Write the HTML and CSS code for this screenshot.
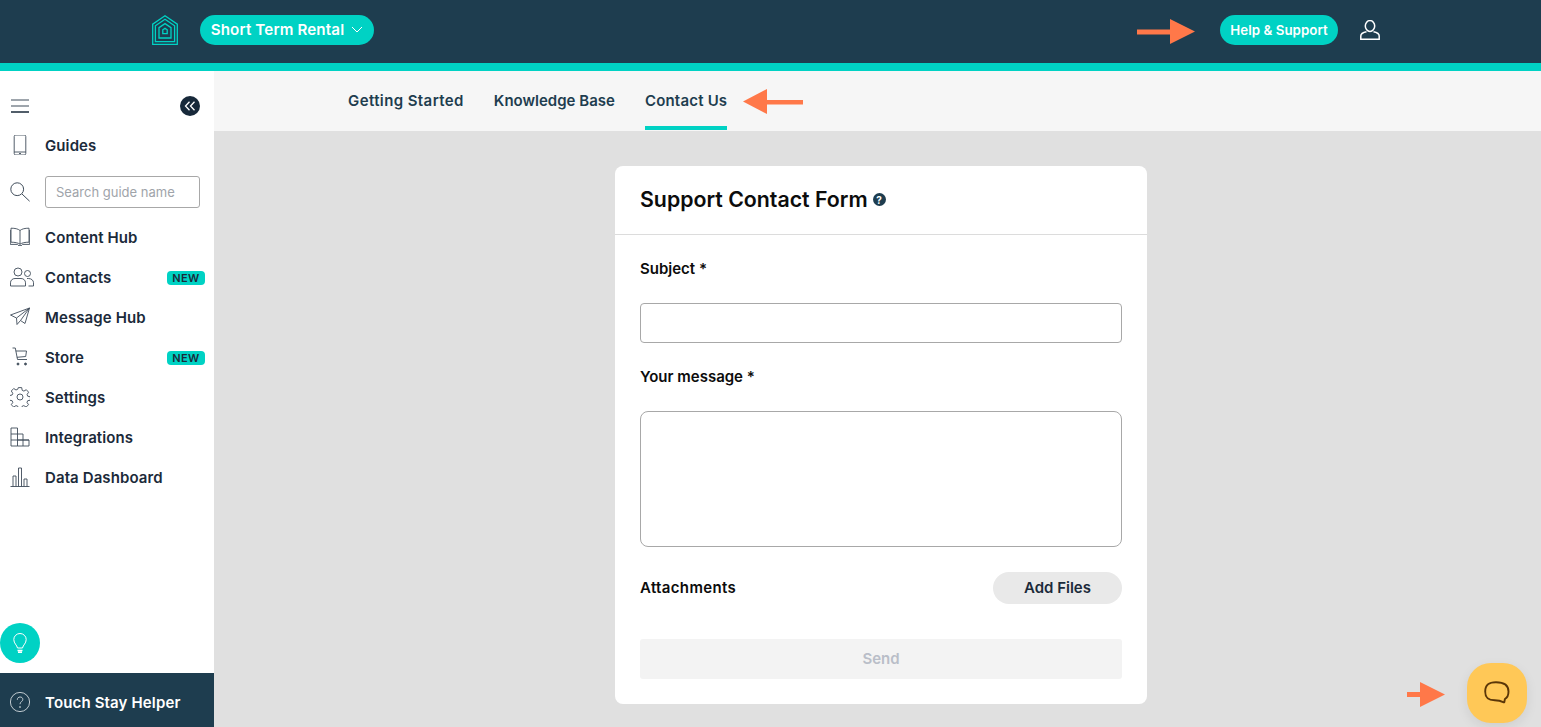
FILE: index.html
```html
<!DOCTYPE html>
<html lang="en">
<head>
<meta charset="utf-8">
<title>Support Contact Form</title>
<link rel="stylesheet" href="styles.css">
</head>
<body>
<header class="topbar">
  <svg class="logo" viewBox="0 0 26 30" fill="none" stroke="#00d2c4" stroke-width="1.300">
    <path d="M.7 29.300V9.200L13 .8l12.300 8.400v20.100z"/>
    <path d="M3.400 26.600V10.800L13 4.200l9.600 6.600v15.800z"/>
    <path d="M7 23V12.600L13 8.600l6 4V23z"/>
    <path d="M10.800 18.600v-3.800L13 13.200l2.200 1.600v3.800z"/>
  </svg>
  <button class="pill pill-large">Short Term Rental
    <svg class="chev" viewBox="0 0 12 7" fill="none" stroke="#fff" stroke-width="1"><path d="M1 1l5 5 5-5"/></svg>
  </button>
  <div class="topbar-right">
    <button class="pill pill-small">Help &amp; Support</button>
    <svg class="user" viewBox="0 0 20 20" fill="none" stroke="#fff" stroke-width="1.500"><ellipse cx="10" cy="6" rx="4.700" ry="5.400"/><path d="M6.500 11.800C3 12.500 .8 14 .8 16v3.200h18.400V16c0-2-2.200-3.500-5.700-4.200"/></svg>
  </div>
</header>

<div class="layout">
  <aside class="sidebar">
    <div class="side-top">
      <svg class="burger" viewBox="0 0 18 14" stroke="#3f4c5a" stroke-width="1.200"><path d="M0 1h18M0 7h18"/><path d="M0 13h18" stroke-width="1.800"/></svg>
      <span class="collapse">
        <svg viewBox="0 0 12 10" fill="none" stroke="#fff" stroke-width="1.300"><path d="M5.500 .8L1.500 5l4 4.200M10.500 .8L6.500 5l4 4.200"/></svg>
      </span>
    </div>
    <nav class="nav">
      <a class="nav-item nav-guides">
        <svg class="ico" viewBox="0 0 20 20" fill="none" stroke="#3f4c5a" stroke-width=".9"><rect x="4.200" y="0" width="11.600" height="20" rx="1.600"/><path d="M4.200 17h11.600M9 18.500h2"/></svg>
        <span>Guides</span>
      </a>
      <div class="nav-search">
        <svg class="ico" viewBox="0 0 20 20" fill="none" stroke="#3f4c5a" stroke-width="1"><circle cx="7.200" cy="7.200" r="6.400"/><path d="M12 12l7.600 7.200"/></svg>
        <input class="search" type="text" placeholder="Search guide name">
      </div>
      <a class="nav-item">
        <svg class="ico" viewBox="0 0 20 20" fill="none" stroke="#3f4c5a" stroke-width=".9"><path d="M10 3.500C8 1.800 5 1.200 1 1.200v14c4 0 7 .6 9 2 2-1.400 5-2 9-2v-14c-4 0-7 .6-9 2.300zM10 3.500v13.700"/><path d="M.3 3v14.400h7.500M19.700 3v14.400h-7.500M8 18.400h4"/></svg>
        <span>Content Hub</span>
      </a>
      <a class="nav-item">
        <svg class="ico ico-wide" viewBox="0 0 24 20" fill="none" stroke="#3f4c5a" stroke-width=".9"><circle cx="8" cy="5" r="4"/><path d="M.5 19v-3.200c0-2.600 2-4.300 4.500-4.300h6c2.500 0 4.500 1.700 4.500 4.300V19z"/><circle cx="17.500" cy="6.500" r="3"/><path d="M17 11.500h1.500c2.800 0 5 1.800 5 4.200V19h-5"/></svg>
        <span>Contacts</span>
        <b class="badge">NEW</b>
      </a>
      <a class="nav-item">
        <svg class="ico" viewBox="0 0 20 20" fill="none" stroke="#3f4c5a" stroke-width=".9"><path d="M19.500 1L.5 8l6 3L19.500 1l-9 12.500L15 16.500z"/><path d="M6.500 11l.5 6.500 3.500-4"/></svg>
        <span>Message Hub</span>
      </a>
      <a class="nav-item">
        <svg class="ico" viewBox="0 0 20 20" fill="none" stroke="#3f4c5a" stroke-width=".9"><path d="M2.500 1h2.800l2.200 11.500h9.500"/><path d="M5.800 4h10.700l-.8 5.500-8.800 .8"/><circle cx="8" cy="17" r="1" fill="#3f4c5a"/><circle cx="15.500" cy="17" r="1" fill="#3f4c5a"/></svg>
        <span>Store</span>
        <b class="badge">NEW</b>
      </a>
      <a class="nav-item">
        <svg class="ico" viewBox="0 0 20 20" fill="none" stroke="#3f4c5a" stroke-width=".9"><circle cx="10" cy="10" r="3"/><path d="M8.300.6h3.400l.5 2.700 1.700.8 2.400-1.400 2.300 2.500-1.500 2.300.6 1.700 2.700.6v3.400l-2.700.5-.7 1.700 1.500 2.300-2.400 2.400-2.300-1.500-1.700.7-.6 2.600H8.300l-.5-2.600-1.800-.7-2.300 1.500-2.400-2.400 1.500-2.300-.7-1.700-2.600-.5V8.600l2.600-.6.7-1.700-1.500-2.300 2.400-2.500L6 3l1.800-.8z"/></svg>
        <span>Settings</span>
      </a>
      <a class="nav-item">
        <svg class="ico" viewBox="0 0 20 20" fill="none" stroke="#3f4c5a" stroke-width=".9"><path d="M1 1h6.500v18H1zM1 7h6.500M1 13h18M7.500 7H13v12M7.500 13H19v6H7.500"/></svg>
        <span>Integrations</span>
      </a>
      <a class="nav-item">
        <svg class="ico" viewBox="0 0 20 20" fill="none" stroke="#3f4c5a" stroke-width=".9"><path d="M.5 19.500h19M3 19.500V9h3v10.500M8.500 19.500V1h3v18.500M14 19.500V12h3v7.500"/></svg>
        <span>Data Dashboard</span>
      </a>
    </nav>
    <span class="bulb">
      <svg viewBox="0 0 14 20" fill="none" stroke="#fff" stroke-width="1"><path d="M4.500 15C4 12 .8 10.500 .8 6.500a6.200 6 0 0 1 12.400 0C13.200 10.500 10 12 9.500 15z"/><path d="M4.500 17.500h5M5 19.200h4" stroke-width="1.400"/></svg>
    </span>
    <div class="helper">
      <svg class="ico" viewBox="0 0 20 20" fill="none" stroke="#e8eef0" stroke-width=".8"><circle cx="10" cy="10" r="9.600"/><path d="M7.300 7.800c0-1.700 1.200-2.800 2.800-2.800s2.700 1 2.700 2.400c0 2.200-2.800 2.400-2.800 4.800"/><circle cx="10" cy="15" r=".5"/></svg>
      <span>Touch Stay Helper</span>
    </div>
  </aside>

  <main class="main">
    <nav class="tabs">
      <a class="tab tab-wide">Getting Started</a>
      <a class="tab">Knowledge Base</a>
      <a class="tab tab-active">Contact Us</a>
    </nav>
    <div class="content">
      <section class="card">
        <h1 class="card-title">Support Contact Form
          <span class="qmark">?</span>
        </h1>
        <form class="form">
          <label class="label label-first">Subject *</label>
          <input class="field" type="text">
          <label class="label label-msg">Your message *</label>
          <textarea class="field area"></textarea>
          <div class="attach">
            <span class="label label-att">Attachments</span>
            <button type="button" class="add">Add Files</button>
          </div>
          <button type="button" class="send">Send</button>
        </form>
      </section>
    </div>
  </main>
</div>

<svg class="arrow arrow-top" viewBox="0 0 58 25"><path d="M0 10.500h33V0l25 12.500L33 25V15.500H0z" fill="#ff7849"/></svg>
<svg class="arrow arrow-tab" viewBox="0 0 60 25"><path d="M60 11v4.500H24V25L0 12.500 24 0v11z" fill="#ff7849"/></svg>
<svg class="arrow arrow-chat" viewBox="0 0 38 25"><path d="M0 10h13V0l25 12.500L13 25V15H0z" fill="#ff7849"/></svg>
<button class="chat" aria-label="Chat">
  <svg viewBox="0 0 26 24" fill="none" stroke="#5a3608" stroke-width="1.900"><path d="M12 1.200c-6 0-10.800 1.300-10.800 9.300 0 7 4 8.600 9.500 8.800 3.500.1 6 .6 8.500 1.900 1 .5 1.300 0 1.300-1l.4-2.200c2.600-1.400 3.600-4 3.600-7.500C24.500 3 19 1.200 12 1.200z"/></svg>
</button>
</body>
</html>
```
FILE: styles.css
```css
* { box-sizing: border-box; }
html, body { margin: 0; height: 727px; overflow: hidden; }
body { font-family: Inter, "Liberation Sans", sans-serif; background: #e0e0e0; color: #1b2a3a; position: relative; }
button, input, textarea { font-family: inherit; }

.topbar { height: 71px; background: #1e3d4f; border-bottom: 8px solid #00d2c4; display: flex; align-items: center; padding: 0 161px 3px 152px; }
.logo { width: 26px; height: 30px; }
.pill { border: 0; background: #00d2c4; color: #fff; font-weight: 600; height: 30px; border-radius: 15px; display: flex; align-items: center; padding: 0 0 1px; justify-content: center; }
.pill-large { width: 174px; margin-left: 22px; font-size: 15.200px; letter-spacing: .12px; gap: 7px; }
.chev { width: 12px; height: 7px; }
.topbar-right { margin-left: auto; display: flex; align-items: center; gap: 22px; }
.pill-small { width: 118px; font-size: 13.300px; letter-spacing: .05px; }
.user { width: 20px; height: 20px; }

.layout { display: flex; height: 656px; }
.sidebar { width: 214px; background: #fff; display: flex; flex-direction: column; flex-shrink: 0; }
.side-top { display: flex; justify-content: space-between; align-items: center; height: 70px; padding: 0 14px 0 11px; }
.burger { width: 18px; height: 14px; }
.collapse { width: 20px; height: 20px; border-radius: 50%; background: #17293a; display: flex; align-items: center; justify-content: center; }
.collapse svg { width: 12px; height: 10px; }
.nav { display: flex; flex-direction: column; margin-top: -16px; }
.nav-item { display: flex; align-items: center; height: 40px; padding: 0 9px 0 10px; font-size: 15px; letter-spacing: .1px; font-weight: 600; color: #1b2a3a; }
.nav-search { display: flex; align-items: center; padding: 1px 14px 0 10px; height: 52px; }
.ico { width: 20px; height: 20px; margin-right: 15px; flex-shrink: 0; }
.ico-wide { width: 24px; margin-right: 11px; }
.search { width: 155px; height: 32px; border: 1px solid #a8a8a8; border-radius: 3px; padding: 0 10px; font-size: 13px; background: #fff; }
.search::placeholder { color: #a0a4aa; opacity: 1; }
.badge { margin: 1px 0 0 auto; background: #00d2c4; color: #1b2a3a; font-size: 11px; font-weight: 600; letter-spacing: .4px; height: 14px; width: 38px; border-radius: 4px; display: flex; align-items: center; justify-content: center; }
.bulb { margin-top: auto; margin-bottom: 10px; width: 40px; height: 40px; border-radius: 50%; background: #00d2c4; display: flex; align-items: center; justify-content: center; }
.bulb svg { width: 14px; height: 20px; }
.helper { height: 54px; background: #1e3d4f; color: #fff; display: flex; align-items: center; padding: 4px 0 0 10px; font-size: 15px; letter-spacing: .15px; font-weight: 600; }

.main { flex: 1; display: flex; flex-direction: column; min-width: 0; }
.tabs { height: 60px; background: #f6f6f6; display: flex; gap: 30px; padding-left: 134px; flex-shrink: 0; }
.tab { height: 59px; padding-top: 4px; display: flex; align-items: center; font-size: 15px; font-weight: 600; color: #1e3d4f; border-bottom: 4px solid transparent; }
.tab-wide { letter-spacing: .4px; }
.tab-active { border-bottom-color: #00d2c4; letter-spacing: .2px; }
.content { display: flex; justify-content: center; padding: 35px 0 0 7px; }
.card { width: 532px; height: 538px; background: #fff; border-radius: 8px; }
.card-title { margin: 0; height: 69px; border-bottom: 1px solid #dcdcdc; padding: 0 25px 2px 25px; display: flex; align-items: center; gap: 5px; font-size: 21.300px; font-weight: 600; color: #0c0c0c; }
.qmark { width: 13px; height: 13px; border-radius: 50%; background: #1e3d4f; color: #fff; font-size: 10px; font-weight: 700; display: flex; align-items: center; justify-content: center; margin-top: 1px; }
.form { padding: 0 25px; display: flex; flex-direction: column; }
.label { font-size: 15px; font-weight: 600; color: #0c0c0c; line-height: 20px; }
.label-first { margin-top: 24px; margin-bottom: 24px; }
.label-msg { margin-top: 24px; margin-bottom: 24px; }
.label-att { letter-spacing: .35px; }
.field { width: 482px; height: 40px; border: 1px solid #a8a8a8; border-radius: 4px; background: #fff; padding: 8px; display: block; }
.area { height: 136px; border-radius: 8px; resize: none; }
.attach { display: flex; justify-content: space-between; align-items: center; margin-top: 25px; }
.add { width: 129px; height: 32px; border: 0; padding: 0 0 2px; border-radius: 16px; background: #e9e9e9; color: #1b2a3a; font-size: 15px; font-weight: 600; }
.send { height: 40px; margin-top: 35px; border: 0; padding: 0 0 2px; border-radius: 3px; background: #f3f3f3; color: #b9bec8; font-size: 15px; font-weight: 600; }

.arrow { position: absolute; }
.arrow-top { left: 1137px; top: 19px; width: 58px; height: 25px; }
.arrow-tab { left: 743px; top: 89px; width: 60px; height: 25px; }
.arrow-chat { left: 1407px; top: 682px; width: 38px; height: 25px; }
.chat { position: absolute; left: 1467px; top: 663px; width: 60px; height: 60px; border: 0; border-radius: 24px; background: #ffc857; box-shadow: 0 4px 12px rgba(0,0,0,.08); display: flex; align-items: center; justify-content: center; padding: 0; }
.chat svg { width: 26px; height: 24px; }
```
